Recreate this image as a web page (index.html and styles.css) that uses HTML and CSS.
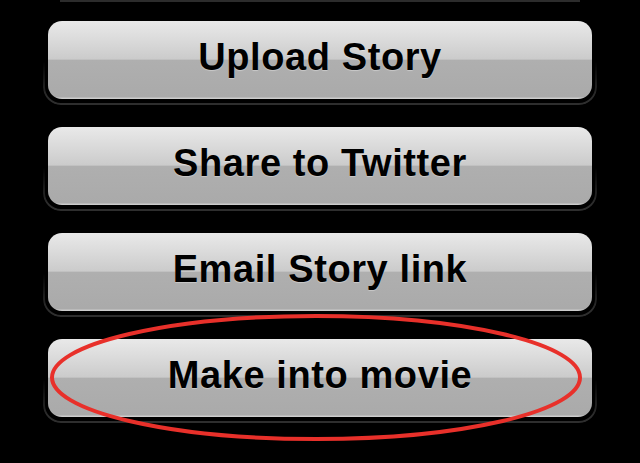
FILE: index.html
```html
<!DOCTYPE html>
<html>
<head>
<meta charset="utf-8">
<link rel="stylesheet" href="styles.css">
</head>
<body>
<div class="screen">
  <div class="edge"></div>
  <div class="list">
    <div class="btn"><span>Upload Story</span></div>
    <div class="btn"><span>Share to Twitter</span></div>
    <div class="btn"><span>Email Story link</span></div>
    <div class="btn"><span>Make into movie</span></div>
  </div>
  <svg class="mark" width="640" height="463" viewBox="0 0 640 463">
    <ellipse cx="316" cy="377.5" rx="264" ry="61.5" fill="none" stroke="#e8302a" stroke-width="4"/>
  </svg>
</div>
</body>
</html>
```
FILE: styles.css
```css
html, body {
  margin: 0;
  padding: 0;
  background: #000;
}
.screen {
  position: relative;
  width: 640px;
  height: 463px;
  overflow: hidden;
  background: #000;
}
.edge {
  height: 2px;
  margin: 0 60px;
  background: #2c2c2c;
}
.list {
  position: relative;
  z-index: 0;
  display: flex;
  flex-direction: column;
  gap: 28px;
  padding: 19px 48px 0 48px;
}
.btn {
  position: relative;
  height: 78px;
  border-radius: 14px;
  box-sizing: border-box;
  background: linear-gradient(to bottom, #e9e9e9 0%, #dadada 25%, #cbcbcb 49%, #afafaf 50%, #aaaaaa 97%, #d6d6d6 100%);
  display: flex;
  align-items: center;
  justify-content: center;
  padding-bottom: 5px;
  font-family: "Liberation Sans", Arial, sans-serif;
  font-weight: bold;
  font-size: 38px;
  letter-spacing: 0.6px;
  color: #000;
  text-shadow: 0 1px 1px rgba(255,255,255,0.35);
}
.btn::before {
  content: "";
  position: absolute;
  left: -5px;
  right: -5px;
  top: -3px;
  bottom: -6px;
  border-radius: 18px;
  border: 2px solid #2e2e2e;
  z-index: -1;
  -webkit-mask-image: linear-gradient(to bottom, transparent 50%, #000 92%);
  mask-image: linear-gradient(to bottom, transparent 50%, #000 92%);
}
.mark {
  position: absolute;
  left: 0;
  top: 0;
  pointer-events: none;
}
```
